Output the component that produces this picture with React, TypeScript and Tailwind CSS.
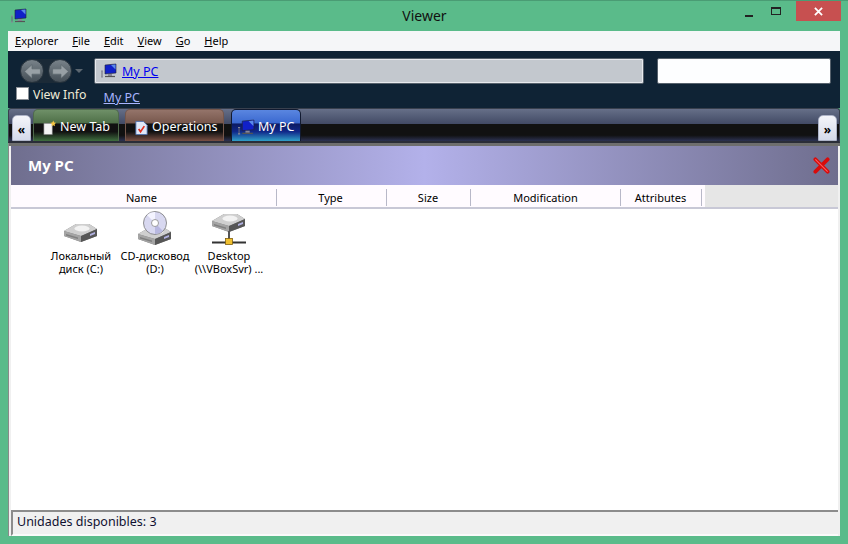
const font = { fontFamily: '"Noto Sans", "DejaVu Sans", sans-serif' };

function PcIcon({ className = '' }: { className?: string }) {
  return (
    <svg viewBox="0 0 16 16" className={className}>
      <path d="M1 8v6" stroke="#667" strokeWidth="1" />
      <path d="M0 8h2M0 14h2" stroke="#889" strokeWidth="1" />
      <path d="M4 2l11 -1v9l-11 1z" fill="#1020c8" stroke="#223" strokeWidth="0.6" />
      <path d="M10 2l4.5 -.5v5z" fill="#5a8ae8" />
      <path d="M7 11h4v2H7z" fill="#889" />
      <path d="M4 13.5h10" stroke="#555" strokeWidth="1.2" />
    </svg>
  );
}

function NavButton({ dir }: { dir: 'left' | 'right' }) {
  return (
    <div className="w-[24px] h-[24px] rounded-full border border-[#26323c] bg-gradient-to-b from-[#79838a] to-[#454f57] flex items-center justify-center">
      <svg viewBox="0 0 18 18" className="w-[19px] h-[19px]">
        {dir === 'left' ? (
          <path d="M1.500 9l7-6.500v4h8v5h-8v4z" fill="#98a0a5" stroke="#5b656b" strokeWidth="0.6" />
        ) : (
          <path d="M16.500 9l-7-6.500v4h-8v5h8v4z" fill="#98a0a5" stroke="#5b656b" strokeWidth="0.6" />
        )}
      </svg>
    </div>
  );
}

function ScrollTab({ label }: { label: string }) {
  return (
    <div className="w-[19px] h-[26px] self-end rounded-t-[5px] bg-gradient-to-b from-[#f4f5fa] to-[#d5daea] border border-[#aeb4c8] flex items-center justify-center text-[12px] font-bold text-black leading-none pt-[4px]">
      {label}
    </div>
  );
}

function Tab({ label, className, icon }: { label: string; className: string; icon: React.ReactNode }) {
  return (
    <div className={`h-[32px] self-end rounded-t-[5px] border border-b-0 flex items-center pt-[4px] text-[12.5px] text-white ${className}`}>
      {icon}
      <span>{label}</span>
    </div>
  );
}

function NewTabIcon() {
  return (
    <svg viewBox="0 0 16 16" className="w-[15px] h-[16px] mr-[3px]">
      <path d="M2 3h9v12H2z" fill="#f4f4f4" stroke="#777" strokeWidth="0.6" />
      <path d="M12 0l1 2 2 .5-1.5 1.5.3 2-1.8-1-1.8 1 .3-2L9 2.500l2-.5z" fill="#f5c542" />
    </svg>
  );
}

function OperationsIcon() {
  return (
    <svg viewBox="0 0 16 16" className="w-[15px] h-[16px] mr-[3px]">
      <path d="M2 1h8l4 4v10H2z" fill="#dfe8f8" stroke="#4a70b0" strokeWidth="0.9" />
      <path d="M5 9l2 3 4-6" fill="none" stroke="#e03020" strokeWidth="1.8" />
    </svg>
  );
}

function DriveBody() {
  return (
    <>
      <path d="M1 20l12-7h13l8 5v7l-16 6-17-6z" fill="#7d7d7d" />
      <path d="M1 20l12-7h13l8 5-16 7z" fill="#cfcfcf" />
      <ellipse cx="19" cy="17.500" rx="7.500" ry="3" fill="#f2f2f2" />
      <path d="M1 20l17 5v6l-17-6z" fill="#a4a4a4" />
      <path d="M18 25l16-7v7l-16 6z" fill="#565656" />
      <path d="M3 23l12 3.500v1.500l-12-3.500z" fill="#7f7f7f" />
      <path d="M27 23l5-2v2l-5 2z" fill="#b0b0e0" />
    </>
  );
}

function HddIcon() {
  return (
    <svg viewBox="0 0 36 36" className="w-[36px] h-[36px]">
      <DriveBody />
    </svg>
  );
}

function CdIcon() {
  return (
    <svg viewBox="0 0 36 36" className="w-[36px] h-[36px]">
      <g transform="translate(0 3)">
        <DriveBody />
      </g>
      <circle cx="18" cy="12" r="11.500" fill="#d8d8f0" stroke="#777" strokeWidth="0.8" />
      <path d="M18 12L10 4a11 11 0 0 1 8-3z" fill="#f4f4ff" />
      <path d="M18 12l8 8a11 11 0 0 1-8 3z" fill="#b8b8e0" />
      <circle cx="18" cy="12" r="3.500" fill="#fff" stroke="#888" strokeWidth="0.8" />
    </svg>
  );
}

function NetIcon() {
  return (
    <svg viewBox="0 0 36 36" className="w-[36px] h-[36px]">
      <g transform="translate(0 -10)">
        <DriveBody />
      </g>
      <path d="M18 20v8" stroke="#555" strokeWidth="2" />
      <path d="M1 31.500h34" stroke="#333" strokeWidth="2" />
      <rect x="14.500" y="27.500" width="7" height="6" fill="#f0c030" stroke="#806010" strokeWidth="0.8" />
    </svg>
  );
}

function Drive({ icon, label }: { icon: React.ReactNode; label: string }) {
  return (
    <div className="flex flex-col items-center w-[74px]">
      <div className="h-[36px] flex items-center justify-center">{icon}</div>
      <div className="mt-[2px] w-[74px] text-center text-[11px] leading-[13px] text-black">{label}</div>
    </div>
  );
}

const columns = [
  { label: 'Name', cls: 'w-[266px] pr-[4px]' },
  { label: 'Type', cls: 'w-[110px] pr-[2px]' },
  { label: 'Size', cls: 'w-[84px] pr-[1px]' },
  { label: 'Modification', cls: 'w-[150px]' },
  { label: 'Attributes', cls: 'w-[81px] pr-[1px]' },
];

export default function App() {
  return (
    <div className="w-[848px] h-[544px] bg-[#5abb8a] flex flex-col overflow-hidden border-t border-[#4a9c74]" style={font}>
      {/* Title bar */}
      <div className="h-[30px] shrink-0 flex items-start relative">
        <PcIcon className="w-[16px] h-[16px] ml-[11px] mt-[7px]" />
        <div className="flex-1 text-center text-[14px] leading-[29px] text-[#111] pl-[86px]">Viewer</div>
        <div className="flex items-start mr-[7px]">
          <div className="w-[26px] h-[20px] flex items-end justify-center pb-[4px]">
            <div className="w-[8px] h-[2px] bg-[#222]" />
          </div>
          <div className="w-[26px] h-[20px] flex items-center justify-center ml-[1px] mr-[7px]">
            <div className="w-[10px] h-[8px] border border-t-2 border-[#222]" />
          </div>
          <div className="w-[45px] h-[20px] bg-[#c75050] flex items-center justify-center">
            <svg viewBox="0 0 10 10" className="w-[9px] h-[9px]">
              <path d="M1 1l8 8M9 1l-8 8" stroke="#fff" strokeWidth="2" />
            </svg>
          </div>
        </div>
      </div>

      <div className="flex-1 flex flex-col mx-[8px] mb-[8px] min-h-0">
        {/* Menu */}
        <div className="h-[20px] shrink-0 bg-[#f5f6f8] flex items-center gap-[14px] pl-[7px] text-[11px] text-black">
          <span><span className="underline">E</span>xplorer</span>
          <span><span className="underline">F</span>ile</span>
          <span><span className="underline">E</span>dit</span>
          <span><span className="underline">V</span>iew</span>
          <span><span className="underline">G</span>o</span>
          <span><span className="underline">H</span>elp</span>
        </div>

        {/* Navigation */}
        <div className="h-[57px] shrink-0 bg-[#0f2335] flex flex-col">
          <div className="flex items-center h-[24px] mt-[8px]">
            <div className="flex items-center gap-[4px] ml-[12px] rounded-full bg-[#1b2a37]">
              <NavButton dir="left" />
              <NavButton dir="right" />
            </div>
            <div className="w-0 h-0 ml-[3px] border-x-[4px] border-t-[4px] border-x-transparent border-t-[#5b6670]" />
            <div className="w-[550px] h-[26px] ml-[11px] bg-[#c3c8ce] border border-[#56616c] outline outline-1 -outline-offset-2 outline-[#e8eaee] rounded-[2px] flex items-center pl-[6px]">
              <PcIcon className="w-[16px] h-[16px]" />
              <span className="ml-[5px] pt-[3px] text-[12.5px] text-[#0000ee] underline">My PC</span>
            </div>
            <div className="w-[174px] h-[26px] ml-[13px] bg-[#fdfeff] border border-[#56616c] rounded-[2px]" />
          </div>
          <div className="flex items-start mt-[3px]">
            <div className="w-[13px] h-[13px] mt-[1px] ml-[8px] bg-white border border-[#8a8f96]" />
            <span className="ml-[4px] text-[12.3px] leading-[18px] text-[#f0ecd8]">View Info</span>
            <span className="ml-[17px] mt-[3px] text-[12.5px] leading-[18px] text-[#a8b4ff] underline">My PC</span>
          </div>
        </div>

        {/* Tab strip */}
        <div className="h-[35px] shrink-0 rounded-t-[3px] border border-b-2 border-[#39404e] border-b-[#2a2d38] flex bg-[linear-gradient(to_bottom,#666f88_0%,#434b66_45%,#434b66_47%,#111111_48%,#111111_82%,#2c3252_100%)] pl-[3px] pr-[2px]">
          <ScrollTab label="«" />
          <Tab
            label="New Tab"
            icon={<NewTabIcon />}
            className="w-[86px] ml-[2px] pl-[8px] border-[#4f6a4c] bg-[linear-gradient(to_bottom,#6f9068_0%,#4d6e46_43%,#111_44%,#111_70%,#3f6f3f_100%)]"
          />
          <Tab
            label="Operations"
            icon={<OperationsIcon />}
            className="w-[99px] ml-[6px] pl-[8px] border-[#75574c] bg-[linear-gradient(to_bottom,#94746a_0%,#77574c_43%,#111_44%,#111_70%,#7a5044_100%)]"
          />
          <Tab
            label="My PC"
            icon={<PcIcon className="w-[17px] h-[17px] mr-[3px]" />}
            className="w-[70px] ml-[7px] pl-[6px] border-[#111a30] bg-[linear-gradient(to_bottom,#5a86e0_0%,#3a68d0_43%,#0c1a60_44%,#10288a_70%,#30a0c8_100%)]"
          />
          <div className="flex-1" />
          <ScrollTab label="»" />
        </div>

        {/* Content */}
        <div className="flex-1 min-h-0 flex flex-col pl-[2px] pr-[2px] bg-[#f0f0f0] border-l border-[#8a8a8a]">
          <div className="h-[3px] shrink-0 bg-[#6e6e6e] -mx-[2px]" />
          <div className="h-[39px] shrink-0 flex items-center justify-between pl-[17px] pr-[8px] bg-[linear-gradient(to_right,#6f6e8e_0%,#b3b1ea_50%,#6f6e8e_100%)]">
            <span className="text-[15px] font-bold text-white">My PC</span>
            <svg viewBox="0 0 18 18" className="w-[17px] h-[17px]">
              <path d="M2.500 2.500l13 13M15.500 2.500l-13 13" stroke="#d80c0c" strokeWidth="4" strokeLinecap="round" />
              <path d="M2.500 2.500l13 13" stroke="#ff5a5a" strokeWidth="1.200" />
            </svg>
          </div>
          <div className="h-[24px] shrink-0 flex bg-[#e6e6e6] border-b-2 border-[#c8c8d6]">
            <div className="flex bg-[#fffbff] pr-[3px]">
              {columns.map((c) => (
                <div key={c.label} className={`${c.cls} h-[17px] mt-[4px] pt-[2px] flex items-center justify-center border-r border-[#b8b8c8] text-[11px] text-black`}>
                  {c.label}
                </div>
              ))}
            </div>
          </div>
          <div className="flex-1 bg-white flex items-start pt-[2px] pl-[33px]">
            <Drive icon={<HddIcon />} label="Локальный диск (C:)" />
            <Drive icon={<CdIcon />} label="CD-дисковод (D:)" />
            <Drive icon={<NetIcon />} label="Desktop (\\VBoxSvr) ..." />
          </div>
          <div className="h-[26px] shrink-0 bg-[#f0f0f0] border-t-2 border-l-2 border-[#8c8c8c] border-b-2 border-b-[#fafafa] flex items-center pl-[4px] pb-[1px] text-[12.5px] text-[#101030]">
            Unidades disponibles: 3
          </div>
        </div>
      </div>
    </div>
  );
}
